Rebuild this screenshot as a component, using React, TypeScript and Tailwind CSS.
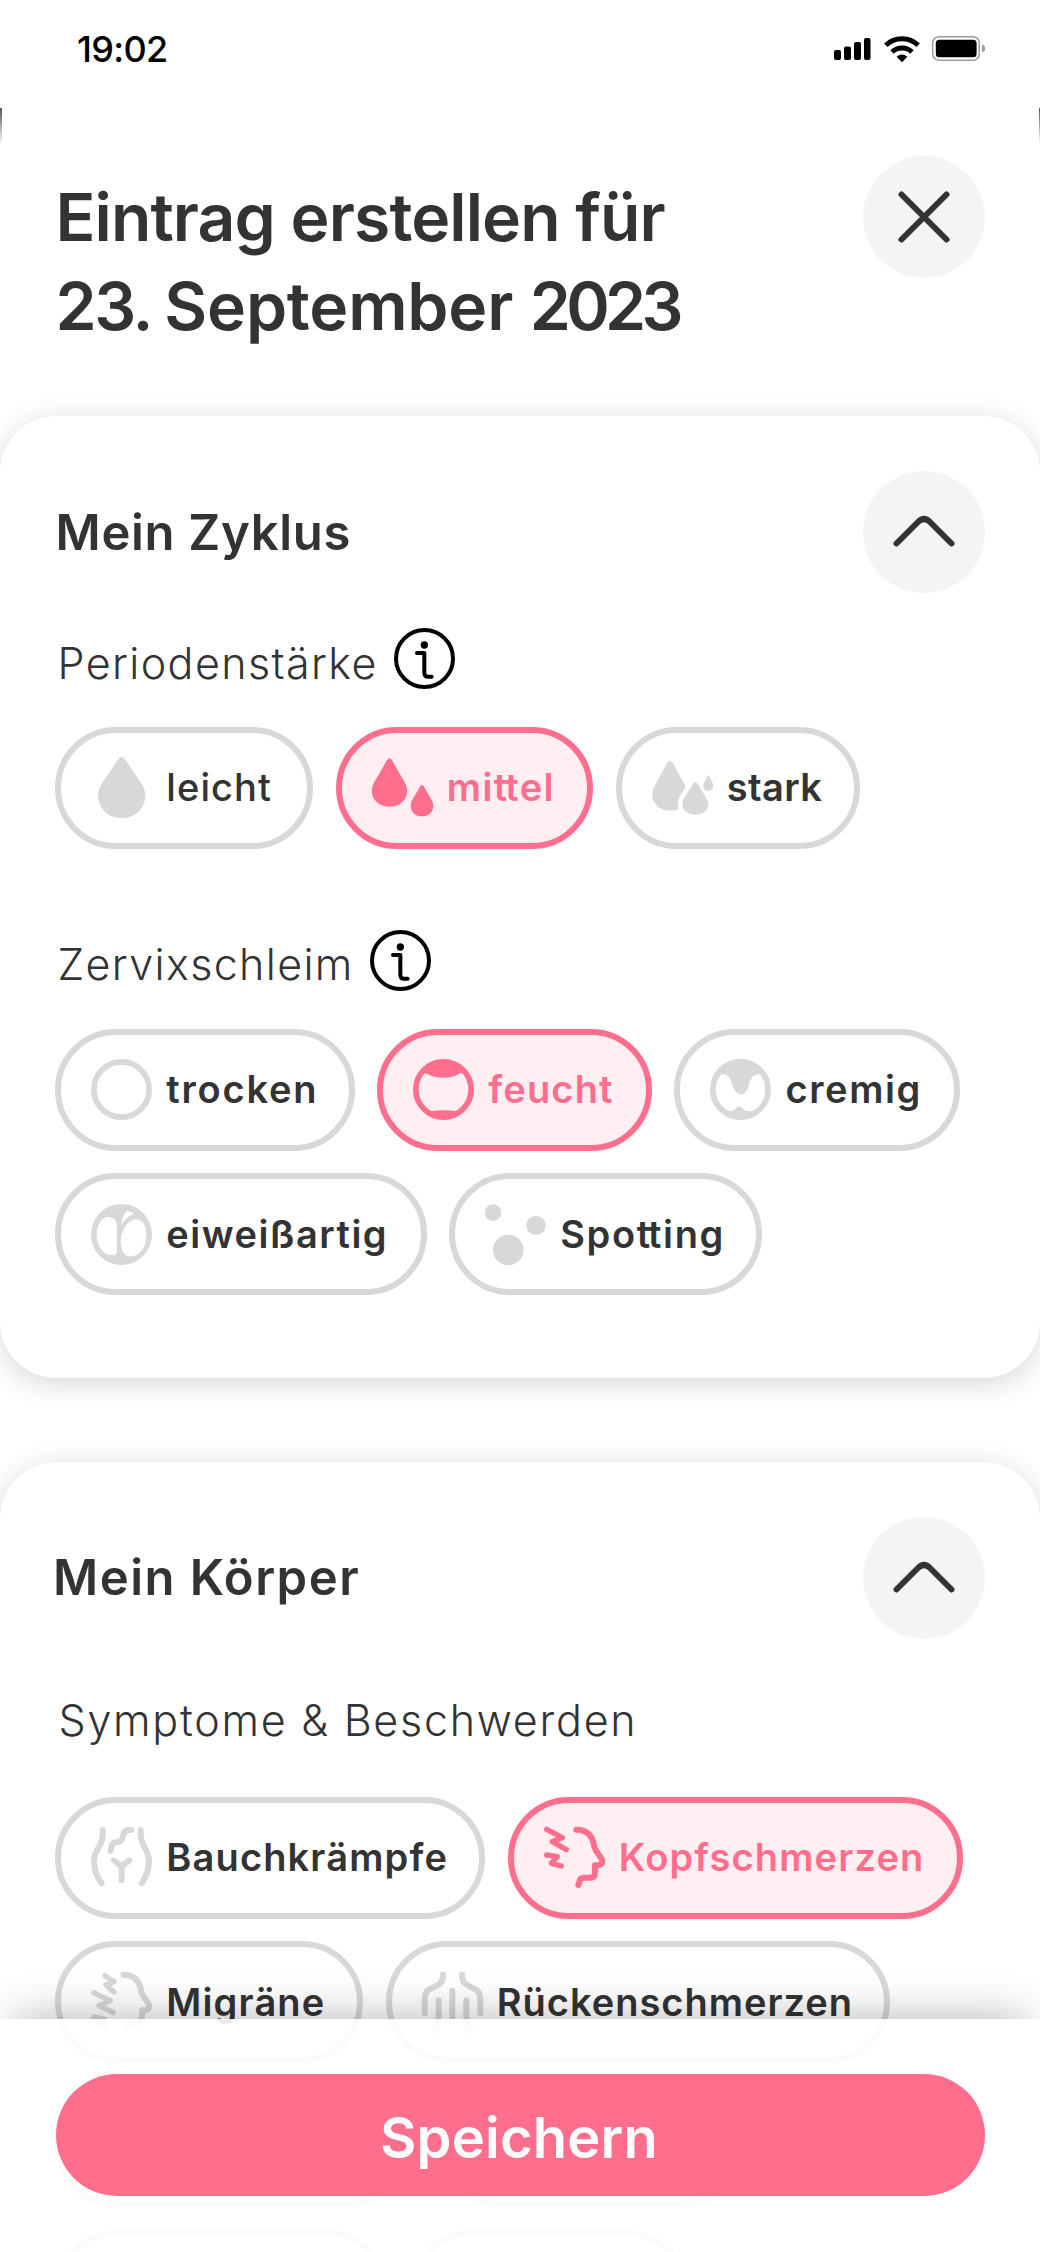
import type { ReactNode } from 'react';

function drop(cx: number, top: number, half: number, wide: number, bottom: number) {
  const h = wide - top;
  const b = bottom - wide;
  return [
    `M${cx} ${top}`,
    `C${cx - half * 0.1} ${top} ${cx - half * 0.2} ${top + h * 0.12} ${cx - half * 0.28} ${top + h * 0.18}`,
    `C${cx - half * 0.62} ${top + h * 0.55} ${cx - half} ${top + h * 0.76} ${cx - half} ${wide}`,
    `C${cx - half} ${wide + b * 0.6} ${cx - half * 0.56} ${bottom} ${cx} ${bottom}`,
    `C${cx + half * 0.56} ${bottom} ${cx + half} ${wide + b * 0.6} ${cx + half} ${wide}`,
    `C${cx + half} ${top + h * 0.76} ${cx + half * 0.62} ${top + h * 0.55} ${cx + half * 0.28} ${top + h * 0.18}`,
    `C${cx + half * 0.2} ${top + h * 0.12} ${cx + half * 0.1} ${top} ${cx} ${top}Z`,
  ].join('');
}

function Icon({ children }: { children: ReactNode }) {
  return (
    <svg viewBox="0 0 183 183" className="size-[61px] shrink-0 overflow-visible" fill="currentColor" stroke="none" aria-hidden="true">
      {children}
    </svg>
  );
}

function LineIcon({ children }: { children: ReactNode }) {
  return (
    <svg viewBox="0 0 183 183" className="size-[61px] shrink-0 overflow-visible" fill="none" stroke="currentColor" strokeWidth="18" strokeLinecap="round" strokeLinejoin="round" aria-hidden="true">
      {children}
    </svg>
  );
}

const Ring = () => <circle cx="91.5" cy="91.5" r="83" fill="none" stroke="currentColor" strokeWidth="17" />;

const LightIcon = () => <Icon><path d={drop(92, 0, 71, 113, 183)} /></Icon>;
const MediumIcon = () => (
  <Icon>
    <path d={drop(52.5, 4, 53, 102, 149)} />
    <path d={drop(150, 83, 34, 146, 178)} />
  </Icon>
);
const HeavyIcon = () => (
  <Icon>
    <path d={drop(54, 11, 53, 113, 161)} />
    <path d={drop(130, 75, 39, 141, 173)} stroke="white" strokeWidth="28" />
    <path d={drop(130, 75, 39, 141, 173)} />
    <path d={drop(169, 54, 15, 87, 102)} />
  </Icon>
);
const DryIcon = () => <Icon><Ring /></Icon>;
const WetIcon = () => (
  <Icon>
    <Ring />
    <path d="M26 37 L35 41 Q60 56 91 56 Q122 56 138 44 Q142 41 148 41 L157 37 A85 85 0 0 0 26 37Z" />
    <path d="M46 158 L52 157 Q91 150 130 157 L137 158 A80 80 0 0 1 46 158Z" />
  </Icon>
);
const CreamyIcon = () => (
  <Icon>
    <Ring />
    <path d="M24 48 Q32 46 40 46 C56 46 63 62 67 78 C73 94 82 106 93 106 C104 106 112 94 117 78 C121 58 130 46 150 46 L160 48 A81 81 0 0 0 24 48Z" />
    <path d="M46 157 H56 C70 157 74 153 79 147 Q88 136 97 147 C104 155 110 157 122 157 H137 A81 81 0 0 1 46 157Z" />
  </Icon>
);
const EggWhiteIcon = () => (
  <Icon>
    <circle cx="91.5" cy="91.5" r="91.5" />
    <g fill="white">
      <path d="M52 39 C70 39 78 50 78 68 V140 Q78 154 66 154 C34 154 17 125 17 92 C17 60 34 39 52 39Z" />
      <path d="M134 46 C155 46 166 66 166 92 C166 128 148 157 116 157 C98 157 89 135 89 112 C89 80 112 46 134 46Z" />
      <path d="M90 64 C92 48 97 30 108 21 Q120 23 131 29 C112 35 99 48 90 64Z" />
    </g>
  </Icon>
);
const SpottingIcon = () => (
  <Icon>
    <circle cx="24" cy="26" r="25" />
    <circle cx="70" cy="138" r="46" />
    <circle cx="153" cy="64" r="29" />
  </Icon>
);
const BellyIcon = () => (
  <LineIcon>
    <path d="M35 9 V24 C35 58 9 66 9 104 C9 132 20 152 32 169" />
    <path d="M149 9 V24 C149 58 174 66 174 104 C174 132 163 152 152 169" />
    <path d="M121 9 H113 C102 9 97 17 96 28 C94 40 88 45 78 45 C66 45 60 54 59 71" />
    <path d="M69 100 L92 118 L115 100 M92 118 V160" />
  </LineIcon>
);
const Face = () => (
  <path d="M97 8 C132 8 147 30 151 60 C152 70 174 92 175 102 C175 110 170 115 162 115 H153 V138 Q153 152 139 152 H120 Q108 152 107 162 L103 174" />
);
const HeadacheIcon = () => (
  <LineIcon>
    <path d="M8 7 L55 32 L25 44 L67 68 M8 84 L40 89 L22 109 L52 117" strokeWidth="16" />
    <Face />
  </LineIcon>
);
const MigraineIcon = () => (
  <LineIcon>
    <path d="M42 11 L69 29 L45 39 L69 60 M8 62 L58 86 L24 101 L67 122 M8 135 L40 141 L22 161 L49 167" strokeWidth="16" />
    <Face />
  </LineIcon>
);
const BackIcon = () => (
  <LineIcon>
    <path d="M63 8 C63 32 52 38 38 44 C18 52 8 60 8 80 V123" />
    <path d="M120 8 C120 32 131 38 145 44 C165 52 175 60 175 80 V123" />
    <path d="M91 56 V150 M50 85 V130 Q50 158 38 176 M133 85 V130 Q133 158 145 176" />
  </LineIcon>
);

const Info = () => (
  <svg viewBox="0 0 183 183" className="size-[61px]" fill="none" stroke="black" strokeWidth="12" strokeLinecap="round" aria-label="Info">
    <circle cx="91.5" cy="91.5" r="85.5" />
    <circle cx="91" cy="51" r="11" fill="black" stroke="none" />
    <path d="M69 75 H91 V134 Q91 146 102 146 H113" strokeLinejoin="round" />
  </svg>
);

function RoundButton({ label, children }: { label: string; children: ReactNode }) {
  return (
    <button aria-label={label} className="size-[122px] shrink-0 rounded-full bg-[#f4f4f4]">
      <svg viewBox="0 0 122 122" className="size-full" fill="none" stroke="#333333" strokeWidth="6" strokeLinecap="round">
        {children}
      </svg>
    </button>
  );
}

function Chip({ width, icon, label, active = false, text = 'font-semibold tracking-[1.15px]' }: { width: string; icon?: ReactNode; label?: ReactNode; active?: boolean; text?: string }) {
  return (
    <button
      className={`flex h-[122px] shrink-0 items-center gap-[14px] rounded-full border-6 pl-[30.3px] text-[38px] whitespace-nowrap ${width} ${
        active ? 'border-[#ff6e8d] bg-[#ffeff2] text-[#ff6e8d]' : 'border-[#d8d8d8] text-[#d8d8d8]'
      }`}
    >
      {icon}
      <span className={`${active ? '' : 'text-[#333333]'} ${text}`}>{label}</span>
    </button>
  );
}

const ChipRow = ({ children }: { children: ReactNode }) => <div className="flex gap-[22.5px]">{children}</div>;

function CardHeader({ title, className }: { title: string; className: string }) {
  return (
    <div className="flex items-center justify-between">
      <h2 className={`text-[49px] font-semibold ${className}`}>{title}</h2>
      <RoundButton label="Einklappen">
        <path d="M33.5 72.5 L55 51 Q61 45 67 51 L88.5 72.5" />
      </RoundButton>
    </div>
  );
}

function StatusBar() {
  return (
    <div className="flex h-[108px] items-start justify-between pt-[27px] pr-[55px] pl-[77px]">
      <span className="text-[36px] leading-[44px] font-medium tracking-[-0.7px] text-black">19:02</span>
      <svg viewBox="0 0 151 44" className="h-[44px] w-[151px]" aria-hidden="true">
        <rect x="0" y="23" width="7" height="10" rx="2" />
        <rect x="10" y="19.5" width="7" height="13.5" rx="2" />
        <rect x="20" y="15" width="7" height="18" rx="2" />
        <rect x="30" y="11" width="6.5" height="22" rx="2" />
        <g fill="none" stroke="black" strokeWidth="5">
          <path d="M51.8 18.2 A23.5 23.5 0 0 1 84.2 18.2" />
          <path d="M58 25 A14.5 14.5 0 0 1 78 25" />
        </g>
        <path d="M68 35.2 L62.6 29.8 Q68 25 73.4 29.8Z" />
        <rect x="98.7" y="9.7" width="46.6" height="23.6" rx="6" fill="none" stroke="#9b9b9b" strokeWidth="1.5" />
        <rect x="101.8" y="12.8" width="40.8" height="17.4" rx="3.5" />
        <path d="M148 17.5 Q151.4 18.5 151.4 21.5 Q151.4 24.5 148 25.5Z" fill="#9b9b9b" />
      </svg>
    </div>
  );
}

const cardClass = 'rounded-[56px] bg-white pr-[55.5px] pl-[55px] pt-[55.4px] shadow-[0_5.5px_28px_rgba(0,0,0,0.155)]';

export default function App() {
  return (
    <div className="relative h-[2252px] w-[1040px] overflow-hidden bg-white font-['Inter',sans-serif] text-[#333333]">
      <StatusBar />
      <header className="flex h-[308px] justify-between">
        <div className="h-[36px] w-[1.5px] bg-linear-to-b from-[#555555] to-transparent" />
        <div className="flex flex-1 items-start justify-between pt-[47.5px] pr-[54px] pl-[54px]">
          <h1 className="pt-[17.5px] text-[66px] leading-[89px] font-semibold">
            <span className="block tracking-[-0.9px]">Eintrag erstellen für</span>
            <span className="block">
              <span className="tracking-[-2.3px]">23. </span>
              <span className="tracking-[-0.2px]">September </span>
              <span className="tracking-[-4.6px]">2023</span>
            </span>
          </h1>
          <RoundButton label="Schließen">
            <path d="M38.5 38.5 L83.5 83.5 M83.5 38.5 L38.5 83.5" />
          </RoundButton>
        </div>
        <div className="h-[36px] w-[1.5px] bg-linear-to-b from-[#555555] to-transparent" />
      </header>

      <section className={`h-[962px] ${cardClass}`}>
        <CardHeader title="Mein Zyklus" className="pl-[0.5px] tracking-[0.7px]" />
        <div className="mt-[34.6px] flex h-[61px] items-start gap-[16px] pl-[2.5px]">
          <span className="pt-[10px] text-[43px] leading-[51px] font-light tracking-[1.4px]">Periodenstärke</span>
          <Info />
        </div>
        <div className="mt-[38px]">
          <ChipRow>
            <Chip width="w-[258px]" icon={<LightIcon />} label="leicht" text="font-medium tracking-[1.1px]" />
            <Chip width="w-[257.5px]" icon={<MediumIcon />} label={<>mi<span className="tracking-[-2px]">t</span>tel</>} active text="font-semibold tracking-[1.4px]" />
            <Chip width="w-[244px]" icon={<HeavyIcon />} label="stark" text="font-semibold tracking-[0.4px]" />
          </ChipRow>
        </div>
        <div className="mt-[81.5px] flex h-[61px] items-start gap-[16px] pl-[2.5px]">
          <span className="pt-[9px] text-[43px] leading-[51px] font-light tracking-[1.35px]">Zervixschleim</span>
          <Info />
        </div>
        <div className="mt-[37.5px] flex flex-col gap-[22.2px]">
          <ChipRow>
            <Chip width="w-[299.5px]" icon={<DryIcon />} label="trocken" text="font-semibold tracking-[1.8px]" />
            <Chip width="w-[274.7px]" icon={<WetIcon />} label="feucht" active />
            <Chip width="w-[285.5px]" icon={<CreamyIcon />} label="cremig" text="font-semibold tracking-[1.6px]" />
          </ChipRow>
          <ChipRow>
            <Chip width="w-[371.5px]" icon={<EggWhiteIcon />} label="eiweißartig" text="font-semibold tracking-[1.5px]" />
            <Chip width="w-[313px]" icon={<SpottingIcon />} label={<>Spo<span className="tracking-[-2px]">t</span>ting</>} text="font-semibold tracking-[1.6px]" />
          </ChipRow>
        </div>
      </section>

      <section className={`mt-[83.5px] h-[962px] ${cardClass}`}>
        <CardHeader title="Mein Körper" className="-mt-[1px] -ml-[2px] tracking-[1.5px]" />
        <p className="mt-[51.1px] pl-[3.5px] text-[43px] leading-[60px] font-light tracking-[1.75px]">Symptome &amp; Beschwerden</p>
        <div className="mt-[47px] flex flex-col gap-[22.2px]">
          <ChipRow>
            <Chip width="w-[430px]" icon={<BellyIcon />} label="Bauchkrämpfe" />
            <Chip width="w-[455px]" icon={<HeadacheIcon />} label="Kopfschmerzen" active />
          </ChipRow>
          <ChipRow>
            <Chip width="w-[308px]" icon={<MigraineIcon />} label="Migräne" />
            <Chip width="w-[504px]" icon={<BackIcon />} label="Rückenschmerzen" text="font-semibold tracking-[1px]" />
          </ChipRow>
          <ChipRow>
            <Chip width="w-[358px]" />
            <Chip width="w-[309px]" />
          </ChipRow>
          <ChipRow>
            <Chip width="w-[333px]" />
            <Chip width="w-[277px]" />
          </ChipRow>
        </div>
      </section>

      <footer className="absolute inset-x-0 bottom-0 h-[233px] bg-white/90 px-[55.5px] pt-[55px] shadow-[0_-14px_42px_-14px_rgba(0,0,0,0.3)]">
        <button className="flex h-[122px] w-full items-center justify-center rounded-full bg-[#ff6e8d] pt-[6px] pr-[2px] text-[56px] font-semibold tracking-[0.2px] text-white">
          Speichern
        </button>
      </footer>
    </div>
  );
}
